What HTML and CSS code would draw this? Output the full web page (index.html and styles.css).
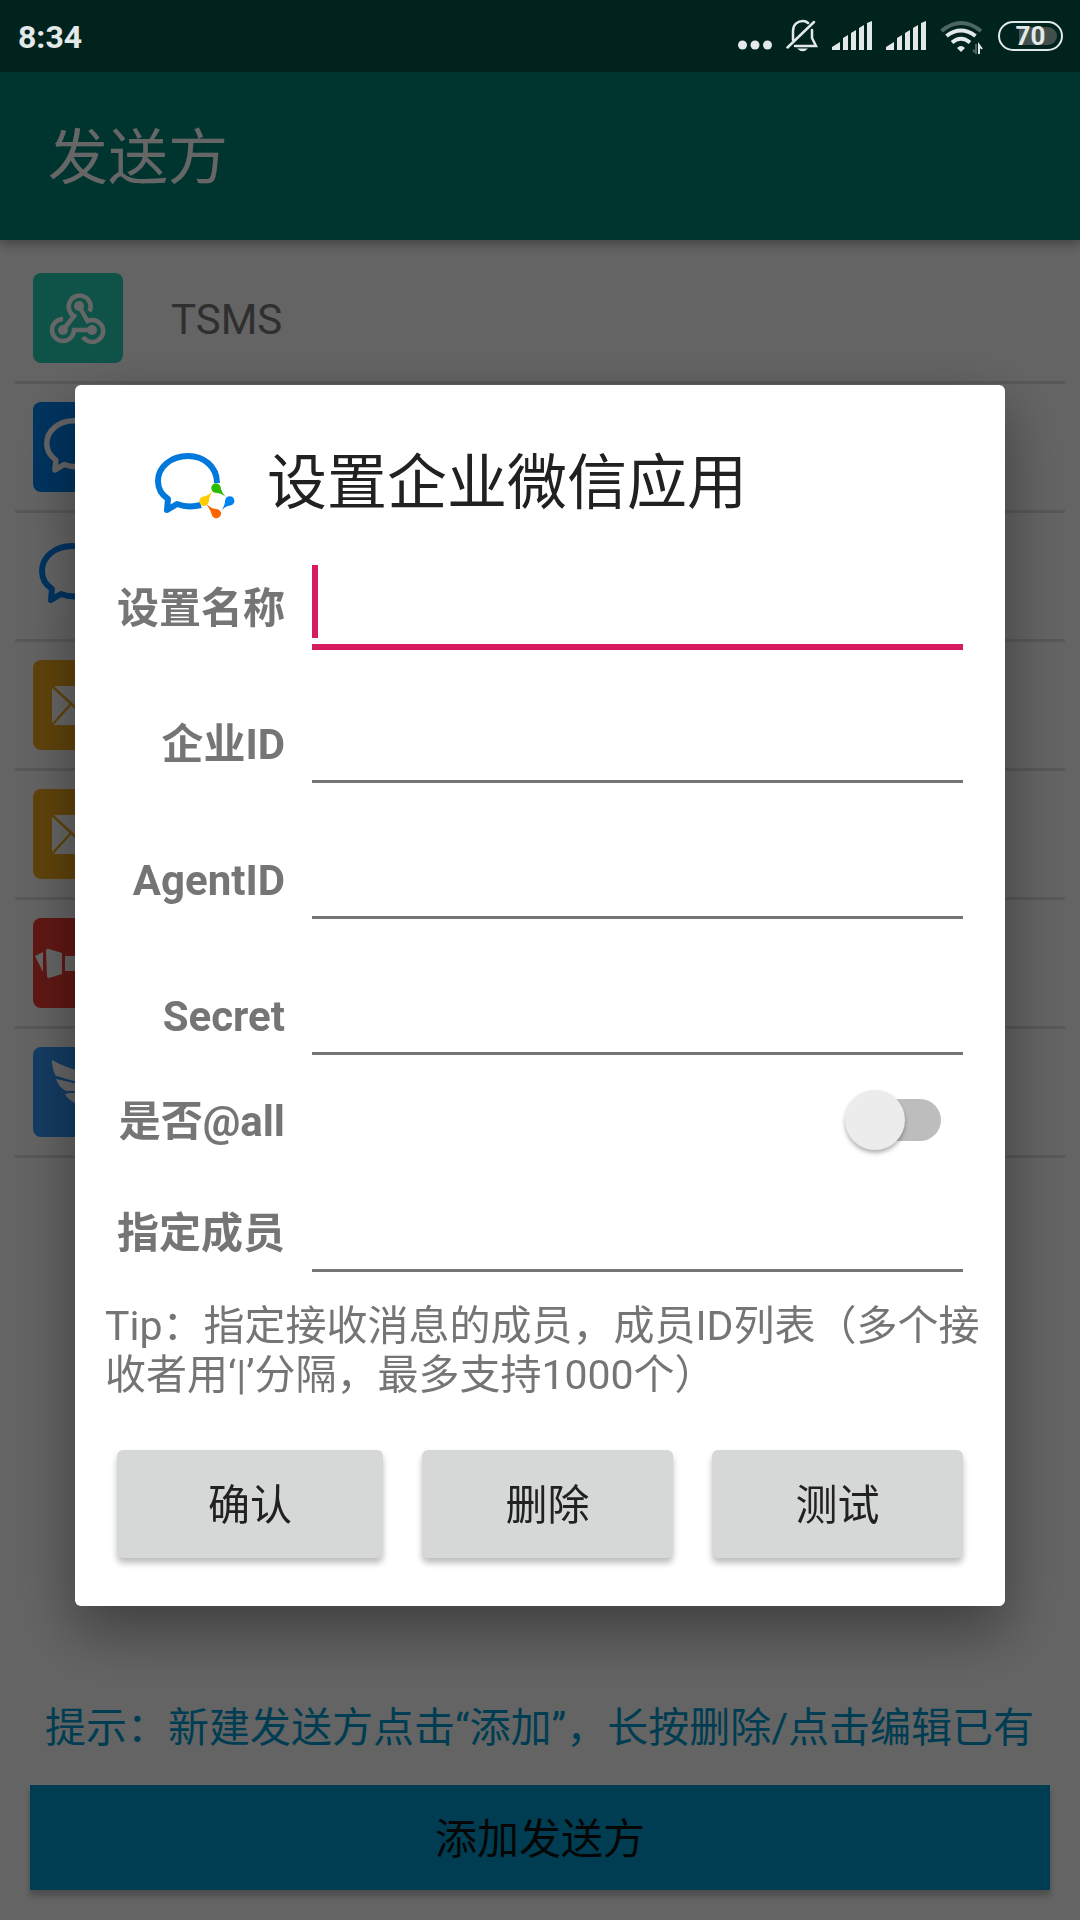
FILE: index.html
```html
<!DOCTYPE html>
<html lang="zh-CN">
<head>
<meta charset="utf-8">
<meta name="viewport" content="width=device-width, initial-scale=1">
<title>发送方</title>
<link rel="stylesheet" href="styles.css">
</head>
<body>
<svg class="defs" aria-hidden="true">
  <symbol id="bubble" viewBox="0 0 80 68">
    <path d="M62 30C62 13 48 3 33 3C16 3 3 14 3 28C3 36 7 42 13 46L12 57L22 51C30 54 38 54 46 52" fill="none" stroke="currentColor" stroke-width="6" stroke-linejoin="round"/>
  </symbol>
  <symbol id="drops" viewBox="0 0 80 68">
    <path d="M56.500 36.500A4.700 4.700 0 1 1 65.500 33.500C66 38 68 41 71 44C67 41 64 40 60 39.800A4.700 4.700 0 0 1 56.500 36.500Z" fill="#2cbc00"/>
    <path d="M72.500 43.800A4.700 4.700 0 1 1 75.500 52.600C71 53 69 55 66 58C69 54 70 51 70.200 47A4.700 4.700 0 0 1 72.500 43.800Z" fill="#0082ef"/>
    <path d="M65.800 59A4.700 4.700 0 1 1 56.800 62C56 58 54 55 51 51C55 54 58 56 62 56A4.700 4.700 0 0 1 65.800 59Z" fill="#fb6500"/>
    <path d="M50.500 52.800A4.700 4.700 0 1 1 47.500 43.800C52 43 55 41 58 38C55 42 54 45 53.800 49A4.700 4.700 0 0 1 50.500 52.800Z" fill="#ffcc00"/>
  </symbol>
  <symbol id="signal" viewBox="0 0 40 36">
    <path d="M0 32v-3l8-5v8zM11 32V20l5-3v15zM19 32V15l5-3v20zM27 32V10l5-3v25zM35 32V5l5-2v29z" fill="currentColor"/>
  </symbol>
  <symbol id="mail" viewBox="0 0 90 90">
    <path d="M19 26H71V65H19Z" fill="#fff"/>
    <path d="M19 26L45 50L71 26M19 65L38 44M71 65L52 44" fill="none" stroke="#f0a81e" stroke-width="2.500"/>
  </symbol>
</svg>

<header class="status">
  <time class="clock">8:34</time>
  <div class="status-icons">
    <svg width="34" height="36" viewBox="0 0 34 36" fill="currentColor"><circle cx="4.500" cy="27" r="4.500"/><circle cx="17" cy="27" r="4.500"/><circle cx="29.500" cy="27" r="4.500"/></svg>
    <svg width="32" height="36" viewBox="0 0 32 36" fill="none" stroke="currentColor" stroke-width="2.500" stroke-linecap="round"><path d="M7 22V13C7 6 12 3 17 3C19 3 21 4 22 5M26 12V20L30 28H9M1.500 29.500L28 4"/><path d="M11 30.500H22Q17 36 11 30.500Z" fill="currentColor" stroke="none"/></svg>
    <svg width="40" height="36"><use href="#signal"/></svg>
    <svg width="40" height="36"><use href="#signal"/></svg>
    <svg width="44" height="36" viewBox="0 0 44 36" fill="none" stroke="currentColor" stroke-width="4"><path d="M1.500 13Q21 -3 41 13" opacity=".35"/><path d="M6.500 18Q21 7 35.500 18M12 24.500Q21 17 30 24.500"/><path d="M17 30Q21 26 25 30L21 34Z" fill="currentColor" stroke="none"/><path d="M33 32L36 35V26" stroke-width="2" opacity=".35"/><path d="M39 36V27L42 31" stroke-width="2"/></svg>
    <span class="battery"><span class="battery-level">70</span></span>
  </div>
</header>

<main class="app">
  <div class="toolbar"><h1>发送方</h1></div>
  <ul class="senders">
    <li class="sender">
      <svg class="sender-icon teal" viewBox="0 0 90 90" fill="none" stroke="#fff" stroke-width="4.500"><path d="M56.500 38.500A11 11 0 1 0 41 43L30 57M30 46A11 11 0 1 0 41 57H59M46 33L54.500 48A11 11 0 1 1 50 64"/><g fill="#fff" stroke="none"><circle cx="46" cy="33" r="5"/><circle cx="30" cy="57" r="5"/><circle cx="59" cy="57" r="5"/></g></svg>
      <span class="sender-name">TSMS</span>
    </li>
    <li class="sender">
      <svg class="sender-icon blue" viewBox="0 0 90 90"><use href="#bubble" x="11" y="16" width="73" height="62"/></svg>
    </li>
    <li class="sender">
      <svg class="sender-icon plain" viewBox="0 0 90 90"><use href="#bubble" x="6" y="12" width="80" height="68"/><use href="#drops" x="6" y="12" width="80" height="68"/></svg>
    </li>
    <li class="sender">
      <svg class="sender-icon amber" viewBox="0 0 90 90"><use href="#mail"/></svg>
    </li>
    <li class="sender">
      <svg class="sender-icon amber" viewBox="0 0 90 90"><use href="#mail"/></svg>
    </li>
    <li class="sender">
      <svg class="sender-icon red" viewBox="0 0 90 90" fill="#fff"><path d="M2 38L10 34V54ZM13 33Q13 30 16 31L29 35V56L16 60Q14 60 14 58ZM32 38H74V53H32Z"/></svg>
    </li>
    <li class="sender">
      <svg class="sender-icon sky" viewBox="0 0 90 90" fill="#fff"><path d="M19 13Q34 22 66 29Q74 32 70 40L58 62H66L44 82L50 66H42L47 58Q35 54 32 47L42 45Q28 46 23 32L42 36Q32 31 23 29Q19 23 19 13Z"/><path d="M23 30L44 36M29 45H44" stroke="#3296fa" stroke-width="2"/></svg>
    </li>
  </ul>
  <footer class="footer">
    <p class="hint">提示：新建发送方点击“添加”，长按删除/点击编辑已有</p>
    <button class="add" type="button">添加发送方</button>
  </footer>
</main>

<div class="scrim">
  <form class="dialog" role="dialog" aria-labelledby="dialog-title">
    <div class="dialog-head">
      <svg class="dialog-icon" width="80" height="68" viewBox="0 0 80 68"><use href="#bubble"/><use href="#drops"/></svg>
      <h2 id="dialog-title">设置企业微信应用</h2>
    </div>
    <div class="fields">
      <div class="field focused"><label for="name">设置名称</label><div class="input-wrap"><input id="name" type="text"><span class="caret"></span></div></div>
      <div class="field"><label for="corp">企业ID</label><input id="corp" type="text"></div>
      <div class="field"><label for="agent">AgentID</label><input id="agent" type="text"></div>
      <div class="field"><label for="secret">Secret</label><input id="secret" type="text"></div>
    </div>
    <div class="field switch-row"><label for="all">是否@all</label><input class="switch" id="all" type="checkbox" role="switch"></div>
    <div class="field"><label for="members">指定成员</label><input id="members" type="text"></div>
    <p class="tip">Tip：指定接收消息的成员，成员ID列表（多个接收者用‘|’分隔，最多支持1000个）</p>
    <div class="actions">
      <button type="button">确认</button>
      <button type="button">删除</button>
      <button type="button">测试</button>
    </div>
  </form>
</div>
</body>
</html>
```
FILE: styles.css
```css
* { box-sizing: border-box; }

body {
  margin: 0;
  background: #fafafa;
  font-family: Roboto, "Noto Sans CJK SC", sans-serif;
  font-size: 42px;
  line-height: 49px;
}

h1, h2, p, ul { margin: 0; padding: 0; font-weight: 400; }
button, input { font: inherit; margin: 0; border: 0; padding: 0; }
svg { display: block; flex: none; }
.defs { position: absolute; width: 0; height: 0; }

/* system status bar, always above the scrim */
.status {
  position: fixed;
  inset: 0 0 auto;
  z-index: 2;
  display: flex;
  align-items: center;
  justify-content: space-between;
  height: 72px;
  padding: 0 17px 0 18px;
  background: #00231e;
  color: #e3e9e8;
}
.clock { padding-top: 2px; font-size: 32px; font-weight: 700; }
.status-icons { display: flex; align-items: center; gap: 14px; }
.battery {
  display: flex;
  width: 65px;
  height: 30px;
  padding: 4px;
  border: 2px solid;
  border-radius: 15px;
}
.battery-level {
  flex: 1;
  border-radius: 9px;
  background: linear-gradient(90deg, transparent 28%, #41504d 28%);
  font-size: 26px;
  font-weight: 700;
  line-height: 18px;
  text-align: center;
}

/* sender list screen */
.app {
  display: flex;
  flex-direction: column;
  min-height: 100vh;
  padding-top: 72px;
}
.toolbar {
  display: flex;
  align-items: center;
  height: 168px;
  padding: 6px 48px 0;
  background: #008577;
  color: #fff;
  box-shadow: 0 4px 12px rgba(0, 0, 0, .35);
}
.toolbar h1 { font-size: 60px; line-height: 70px; }
.senders { flex: 1; padding: 15px; list-style: none; }
.sender {
  display: flex;
  align-items: center;
  gap: 48px;
  height: 129px;
  padding: 0 18px;
  border-bottom: 3px solid #dcdcdc;
  color: #757575;
}
.sender-name { padding-top: 2px; }
.sender-icon { width: 90px; height: 90px; border-radius: 8px; }
.teal { background: #26cfb4; }
.blue { background: #0082ef; color: #fff; }
.plain { background: #fcfcfc; color: #0082ef; }
.amber { background: #f0a81e; }
.red { background: #f03c32; }
.sky { background: #3296fa; }
.footer { padding: 0 30px 30px; }
.hint {
  margin-bottom: 32px;
  padding-left: 15px;
  color: #0099cc;
  font-size: 41px;
  white-space: nowrap;
}
.add {
  display: block;
  width: 100%;
  height: 105px;
  padding-top: 4px;
  background: #0099cc;
  color: #111;
  box-shadow: 0 6px 6px rgba(0, 0, 0, .24);
}

/* dialog */
.scrim {
  position: fixed;
  inset: 0;
  z-index: 1;
  display: flex;
  align-items: center;
  padding: 70px 75px 0;
  background: rgba(0, 0, 0, .6);
}
.dialog {
  flex: 1;
  padding: 64px 42px 48px;
  border-radius: 6px;
  background: #fff;
  color: #757575;
  box-shadow: 0 24px 60px rgba(0, 0, 0, .4);
}
.dialog-head {
  display: flex;
  gap: 32px;
  height: 72px;
  margin-bottom: 46px;
  padding-left: 38px;
  color: #212121;
}
.dialog-icon { align-self: flex-end; color: #0078dc; }
.dialog-head h2 { font-size: 60px; line-height: 70px; }

.fields { display: grid; gap: 56px; }
.field {
  display: grid;
  grid-template-columns: 168px 1fr;
  align-items: center;
  column-gap: 27px;
}
.field label {
  padding-top: 4px;
  font-weight: 700;
  text-align: right;
  white-space: nowrap;
}
.field input[type="text"] {
  display: block;
  width: 100%;
  height: 80px;
  border-bottom: 3px solid #757575;
  border-radius: 0;
  background: transparent;
  outline: none;
}
.input-wrap { position: relative; }
.focused input[type="text"] {
  border-color: #d81b60;
  box-shadow: 0 3px 0 #d81b60;
}
.caret {
  position: absolute;
  left: 0;
  bottom: 9px;
  width: 6px;
  height: 73px;
  background: #d81b60;
}

.switch-row { height: 80px; margin: 25px 0 32px; }
.switch {
  position: relative;
  justify-self: end;
  width: 96px;
  height: 60px;
  margin-right: 22px;
  appearance: none;
}
.switch::before {
  content: "";
  position: absolute;
  inset: 9px 0 9px 12px;
  border-radius: 21px;
  background: #bdbdbd;
}
.switch::after {
  content: "";
  position: absolute;
  inset: 0 auto 0 0;
  width: 60px;
  border-radius: 50%;
  background: #ececec;
  box-shadow: 0 3px 4px rgba(0, 0, 0, .3);
}

.tip { margin: 30px -36px 50px -12px; font-size: 41px; }
.actions {
  display: grid;
  grid-template-columns: 266fr 251fr 251fr;
  gap: 39px;
}
.actions button {
  height: 108px;
  padding-top: 4px;
  border-radius: 6px;
  background: #d6d7d7;
  color: #212121;
  box-shadow: 0 5px 6px rgba(0, 0, 0, .26);
}
```
